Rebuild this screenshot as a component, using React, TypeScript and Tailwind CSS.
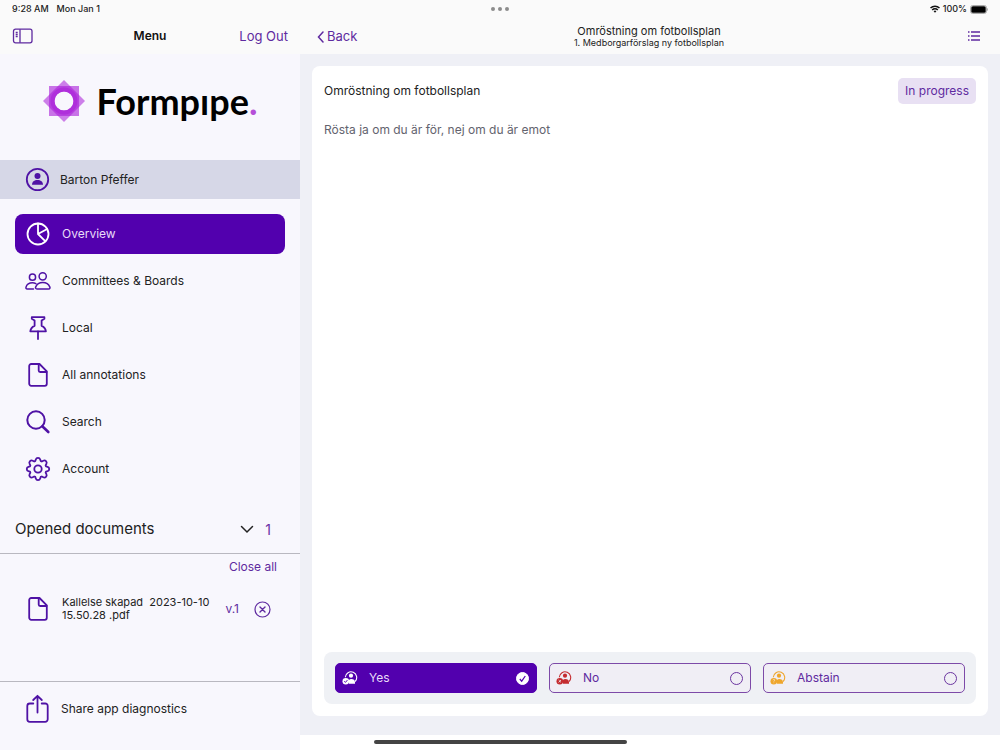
import { useState } from 'react'
import type { ReactNode } from 'react'
import clsx from 'clsx'

const menuItems = [
  { id: 'overview', label: 'Overview', icon: <PieIcon /> },
  { id: 'committees', label: 'Committees & Boards', icon: <PeopleIcon /> },
  { id: 'local', label: 'Local', icon: <PinIcon /> },
  { id: 'annotations', label: 'All annotations', icon: <FileIcon /> },
  { id: 'search', label: 'Search', icon: <SearchIcon /> },
  { id: 'account', label: 'Account', icon: <GearIcon /> },
]

const voteOptions = [
  { id: 'yes', label: 'Yes', color: 'text-[#3c9a4a]' },
  { id: 'no', label: 'No', color: 'text-[#c42b2f]' },
  { id: 'abstain', label: 'Abstain', color: 'text-[#efa62c]' },
]

function Icon({ children, width = 26, height = 26 }: { children: ReactNode; width?: number; height?: number }) {
  return (
    <svg
      width={width}
      height={height}
      viewBox={`0 0 ${width} ${height}`}
      fill="none"
      stroke="currentColor"
      strokeWidth="1.8"
      strokeLinecap="round"
      strokeLinejoin="round"
      aria-hidden="true"
      className="shrink-0"
    >
      {children}
    </svg>
  )
}

function ProfileIcon() {
  return (
    <Icon>
      <circle cx="12.5" cy="12.5" r="10.7" />
      <circle cx="12.5" cy="9" r="3" fill="currentColor" stroke="none" />
      <path d="M7 17.8c0-3.2 2.4-4.8 5.5-4.8s5.5 1.6 5.5 4.8z" fill="currentColor" stroke="none" />
    </Icon>
  )
}

function PieIcon() {
  return (
    <Icon>
      <circle cx="13" cy="13" r="10.5" />
      <path d="M13 2.5V13l7.5 7.3M13 13l9.2-5" />
    </Icon>
  )
}

function PeopleIcon() {
  return (
    <Icon>
      <circle cx="7.5" cy="9.2" r="3.1" strokeWidth="1.5" />
      <circle cx="17.7" cy="8.3" r="3.6" strokeWidth="1.5" />
      <path d="M8.5 21H2.3C.9 21 .8 19.9 1 19.1c.8-2.7 3.3-4.3 6.5-4.3 1.3 0 2.4.3 3.4.8" strokeWidth="1.5" />
      <path d="M12 21h11.5c1.6 0 1.7-1.2 1.3-2.1-1.1-2.8-3.7-4.4-7-4.4s-6 1.6-7.1 4.4c-.4.9-.2 2.1 1.3 2.1z" strokeWidth="1.5" />
    </Icon>
  )
}

function PinIcon() {
  return (
    <Icon>
      <path d="M6.8 2.2h12.600v1.600l-2.800 1.800v5.200c2.400 1 4 2.800 4.300 5.500H5.300c.3-2.700 1.900-4.500 4.300-5.500V5.600L6.800 3.800z" />
      <path d="M13 16.500V24" />
    </Icon>
  )
}

function FileIcon() {
  return (
    <Icon>
      <path d="M6.2 2h8.3l7.3 7.3v12.5a2 2 0 0 1-2 2H6.2a2 2 0 0 1-2-2V4a2 2 0 0 1 2-2z" />
      <path d="M13.7 2.300v6.200a1.500 1.500 0 0 0 1.500 1.500h6.300" />
    </Icon>
  )
}

function SearchIcon() {
  return (
    <Icon>
      <circle cx="11" cy="11" r="8.700" strokeWidth="2" />
      <path d="M17.300 17.300l6 5.700" strokeWidth="2.600" />
    </Icon>
  )
}

function GearIcon() {
  return (
    <Icon>
      <circle cx="13" cy="13" r="3.700" />
      <path d="M10.800 3.500a2.300 2.300 0 0 1 4.400 0l.5 1.600 1.100.4 1.500-.8a2.300 2.300 0 0 1 3.100 3.100l-.8 1.500.4 1.100 1.600.4a2.300 2.300 0 0 1 0 4.400l-1.600.4-.4 1.100.8 1.500a2.300 2.300 0 0 1-3.100 3.100l-1.500-.8-1.100.4-.5 1.600a2.300 2.300 0 0 1-4.400 0l-.5-1.600-1.100-.4-1.500.8a2.300 2.300 0 0 1-3.100-3.100l.8-1.500-.4-1.100-1.600-.4a2.300 2.300 0 0 1 0-4.400l1.600-.4.400-1.100-.8-1.500a2.300 2.300 0 0 1 3.100-3.100l1.500.8 1.100-.4z" />
    </Icon>
  )
}

function ShareIcon() {
  return (
    <Icon height={30}>
      <path d="M8.300 9.500H4.800a2.500 2.500 0 0 0-2.500 2.500v13.300a2.500 2.500 0 0 0 2.500 2.500h15.400a2.500 2.500 0 0 0 2.500-2.500V12a2.500 2.500 0 0 0-2.500-2.500h-3.500" />
      <path d="M12.500 18.500V2M8.200 6l4.300-4.200L16.800 6" />
    </Icon>
  )
}

function Logo() {
  return (
    <div className="flex items-center gap-3" role="img" aria-label="Formpipe">
      <svg width="42" height="42" viewBox="0 0 42 42" fill="#a81bd8" fillRule="evenodd" aria-hidden="true">
        <path opacity="0.55" d="M21 0l21 21-21 21L0 21zM21 11.500a9.500 9.500 0 1 0 0 19 9.500 9.500 0 0 0 0-19z" />
        <path opacity="0.6" d="M6 6h30v30H6zM21 11.500a9.500 9.500 0 1 0 0 19 9.500 9.500 0 0 0 0-19z" />
        <circle cx="21" cy="21" r="11.500" fill="none" stroke="#a81bd8" strokeWidth="4" opacity="0.5" />
      </svg>
      <span className="font-[Lato,sans-serif] text-[36px] leading-[48px] font-bold text-black">
        Formpıpe<span className="text-[#b54fd8]">.</span>
      </span>
    </div>
  )
}

function VoteIcon({ id }: { id: string }) {
  return (
    <svg width="16" height="14" viewBox="0 0 16 14" fill="none" stroke="currentColor" aria-hidden="true">
      <path d="M3.300 6.200a5.700 5.700 0 1 1 9.800 4.300" strokeWidth="1.100" />
      <circle cx="9" cy="4.700" r="2.100" fill="currentColor" stroke="none" />
      <path d="M7 12.700V8.900c.6-.6 1.300-.9 2.200-.9 2.200 0 3.800 1.200 3.800 3.200v1.500z" fill="currentColor" stroke="none" />
      <circle cx="3.800" cy="10.200" r="3.300" fill="currentColor" stroke="none" />
      {id === 'yes' && <path d="M2.300 10.300l1.100 1.100 2-2.300" stroke="#5200ae" />}
      {id === 'no' && <path d="M2.600 9l2.400 2.400M5 9l-2.400 2.400" stroke="#f0eef5" strokeWidth="0.800" />}
      {id === 'abstain' && <path d="M3 9.200c.2-1.300 2-.9 1.700.1-.1.500-.9.600-.9 1.300M3.800 11.600v.6" stroke="#f0eef5" strokeWidth="0.700" />}
    </svg>
  )
}

function StatusBar() {
  return (
    <div className="grid h-[18px] grid-cols-3 items-center bg-[#fafafa] px-3 text-[9px] font-medium text-[#222]">
      <div className="flex gap-2">
        <span>9:28 AM</span>
        <span>Mon Jan 1</span>
      </div>
      <div className="flex justify-center gap-[3px]">
        <i className="size-1 rounded-full bg-[#8c8c8c]" />
        <i className="size-1 rounded-full bg-[#8c8c8c]" />
        <i className="size-1 rounded-full bg-[#8c8c8c]" />
      </div>
      <div className="flex items-center justify-end gap-[3px]">
        <svg width="10" height="8" viewBox="0 0 10 8" fill="none" stroke="#111" strokeWidth="1.500" aria-hidden="true">
          <path d="M.5 3a6.500 6.500 0 0 1 9 0M2.200 5a4 4 0 0 1 5.600 0" />
          <path d="M5 7.800L3.600 6.300a2 2 0 0 1 2.800 0z" fill="#111" stroke="none" />
        </svg>
        <span>100%</span>
        <svg width="18" height="9" viewBox="0 0 18 9" aria-hidden="true">
          <rect x=".5" y=".5" width="16" height="8" rx="2.200" fill="none" stroke="#aaa" />
          <rect x="1.300" y="1.300" width="14.400" height="6.400" rx="1.500" fill="#000" />
          <path d="M17.200 3v3c1-.4 1-2.600 0-3z" fill="#999" />
        </svg>
      </div>
    </div>
  )
}

function Sidebar() {
  const [active, setActive] = useState('overview')

  return (
    <aside className="flex w-[30%] shrink-0 flex-col bg-[#f8f7fd]">
      <header className="grid h-9 grid-cols-3 items-center bg-[#fafafa] px-3 text-[13px] text-[#5f2aa0]">
        <button aria-label="Toggle sidebar" className="justify-self-start">
          <svg width="22" height="16" viewBox="0 0 22 16" fill="none" stroke="currentColor" strokeWidth="1.300" aria-hidden="true">
            <rect x="1.500" y="1.200" width="18.500" height="13.600" rx="2" />
            <path d="M8 1.200v13.600M3.700 4.500h2M3.700 6.500h2M3.700 8.500h2" />
          </svg>
        </button>
        <h1 className="text-center text-[12px] font-semibold text-[#111]">Menu</h1>
        <button className="justify-self-end pt-px">Log Out</button>
      </header>

      <div className="flex h-[106px] items-center justify-center pb-3">
        <Logo />
      </div>

      <button className="flex h-[39px] w-full items-center gap-[9px] bg-[#d6d7e7] px-[25px] text-[12px] text-[#222]">
        <span className="text-[#4f12a5]"><ProfileIcon /></span>
        Barton Pfeffer
      </button>

      <nav className="mt-[15px] flex flex-col gap-[7px] px-[15px]">
        {menuItems.map((item) => (
          <button
            key={item.id}
            onClick={() => setActive(item.id)}
            className={clsx(
              'flex h-10 items-center gap-[11px] rounded-lg px-[10px] text-[12px]',
              active === item.id ? 'bg-[#5200ae] text-[#e9dcf8]' : 'text-[#222]'
            )}
          >
            <span className={active === item.id ? 'text-white' : 'text-[#4f12a5]'}>{item.icon}</span>
            {item.label}
          </button>
        ))}
      </nav>

      <section className="mt-5 flex-1">
        <div className="flex h-[45px] items-center border-b border-[#b9b8c0] pr-[29px] pb-[3px] pl-[15px] text-[#222]">
          <h2 className="flex-1 text-[15px]">Opened documents</h2>
          <button aria-label="Collapse opened documents" className="mr-[11px]">
            <svg width="14" height="9" viewBox="0 0 14 9" fill="none" stroke="currentColor" strokeWidth="1.500" strokeLinecap="round" aria-hidden="true">
              <path d="M1.500 1.500L7 7l5.500-5.500" />
            </svg>
          </button>
          <span className="text-[14px] text-[#6b2fa5]">1</span>
        </div>
        <div className="flex h-[25px] items-center justify-end pr-[23px] text-[12px] text-[#5f2aa0]">
          <button>Close all</button>
        </div>
        <div className="mt-[10px] flex h-10 items-center pr-[29px] pl-[25px] text-[#5f2aa0]">
          <span className="mr-[11px] text-[#4f12a5]"><FileIcon /></span>
          <a href="#document" className="flex-1 text-[11px] leading-[13px] whitespace-pre-line text-[#222]">
            {'Kallelse skapad \u00a02023-10-10\n15.50.28 .pdf'}
          </a>
          <span className="mr-[15px] text-[12px]">v.1</span>
          <button aria-label="Close document">
            <svg width="17" height="17" viewBox="0 0 17 17" fill="none" stroke="currentColor" strokeWidth="1.200" strokeLinecap="round" aria-hidden="true">
              <circle cx="8.500" cy="8.500" r="7.500" />
              <path d="M6 6l5 5M11 6l-5 5" strokeWidth="1.400" />
            </svg>
          </button>
        </div>
      </section>

      <button className="flex h-[69px] items-center gap-[10px] border-t border-[#b9b8c0] px-[25px] pb-[15px] text-[12px] text-[#222]">
        <span className="text-[#4f12a5]"><ShareIcon /></span>
        Share app diagnostics
      </button>
    </aside>
  )
}

function VoteBar() {
  const [vote, setVote] = useState('yes')

  return (
    <fieldset className="grid grid-cols-3 gap-3 rounded-lg bg-[#eff1f5] p-[11px]">
      {voteOptions.map((option) => {
        const selected = vote === option.id
        return (
          <label
            key={option.id}
            className={clsx(
              'flex h-[30px] items-center rounded-[5px] border px-[6px] text-[12px]',
              selected ? 'border-[#5200ae] bg-[#5200ae] text-[#e9dcf8]' : 'border-[#7d4aa8] bg-[#f0eef5] text-[#5f2aa0]'
            )}
          >
            <span className={clsx('mr-[11px]', selected ? 'text-white' : option.color)}>
              <VoteIcon id={option.id} />
            </span>
            <span className="flex-1">{option.label}</span>
            <span className="relative mr-px size-[13px]">
              <input
                type="radio"
                name="vote"
                value={option.id}
                checked={selected}
                onChange={() => setVote(option.id)}
                className="block size-[13px] appearance-none rounded-full border border-[#6b35a0] checked:border-white checked:bg-white"
              />
              {selected && (
                <svg viewBox="0 0 13 13" fill="none" stroke="#5200ae" strokeWidth="1.200" aria-hidden="true" className="pointer-events-none absolute inset-0">
                  <path d="M3.800 7l1.900 2.200L9.300 4" />
                </svg>
              )}
            </span>
          </label>
        )
      })}
    </fieldset>
  )
}

export default function App() {
  return (
    <div className="flex min-h-screen flex-col bg-white font-[Inter,sans-serif]">
      <StatusBar />
      <div className="flex flex-1">
        <Sidebar />
        <div className="flex flex-1 flex-col">
          <header className="grid h-9 grid-cols-[1fr_auto_1fr] items-center bg-[#fafafa] pr-[19px] pl-[17px] text-[#5f2aa0]">
            <button className="flex items-center gap-[3px] justify-self-start pt-px text-[13px]">
              <svg width="7" height="12" viewBox="0 0 7 12" fill="none" stroke="currentColor" strokeWidth="1.500" strokeLinecap="round" aria-hidden="true">
                <path d="M6 1L1.500 6 6 11" />
              </svg>
              Back
            </button>
            <div className="pt-px text-center text-[#222]">
              <h2 className="text-[11px] leading-3">Omröstning om fotbollsplan</h2>
              <p className="text-[9px] leading-3">1. Medborgarförslag ny fotbollsplan</p>
            </div>
            <button aria-label="Agenda" className="justify-self-end">
              <svg width="14" height="12" viewBox="0 0 14 12" fill="none" stroke="currentColor" strokeWidth="1.300" aria-hidden="true">
                <path d="M4 2h9M4 6h9M4 10h9M1 2h1.500M1 6h1.500M1 10h1.500" />
              </svg>
            </button>
          </header>

          <main className="flex flex-1 flex-col bg-[#eff0f6] px-3 pt-3 pb-[19px]">
            <article className="flex flex-1 flex-col rounded-lg bg-white p-3">
              <div className="flex items-center justify-between">
                <h3 className="text-[12px] text-[#222]">Omröstning om fotbollsplan</h3>
                <span className="rounded-[5px] bg-[#e8e0f3] px-[7px] text-[12px] leading-[26px] text-[#5f2aa0]">In progress</span>
              </div>
              <p className="mt-4 flex-1 text-[12px] leading-5 text-[#63636e]">Rösta ja om du är för, nej om du är emot</p>
              <VoteBar />
            </article>
          </main>

          <footer className="flex h-[15px] justify-center bg-white pr-[300px]">
            <div className="mt-[5px] h-1 w-[253px] rounded-full bg-[#444]" />
          </footer>
        </div>
      </div>
    </div>
  )
}
